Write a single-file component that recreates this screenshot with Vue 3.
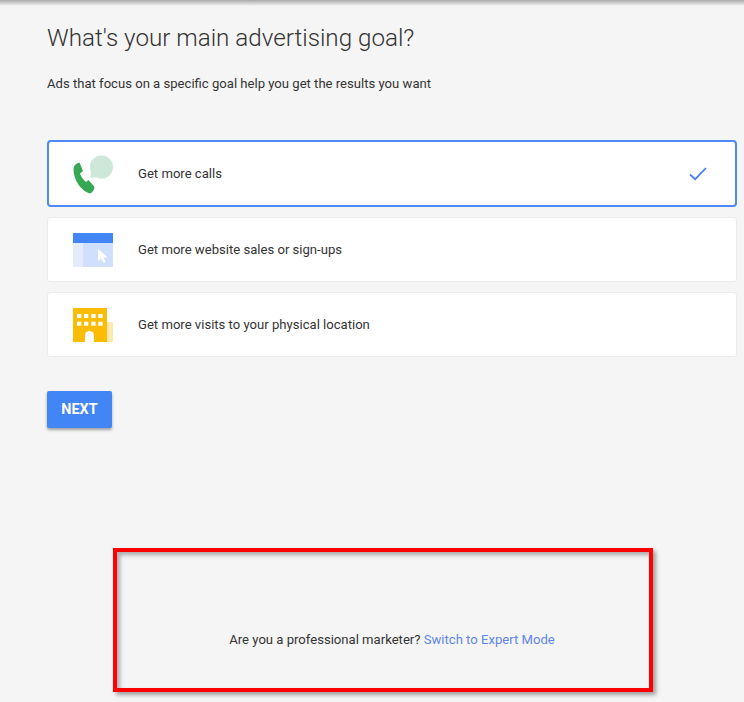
<script setup>
const goals = [
  { id: 'calls', label: 'Get more calls', selected: true },
  { id: 'web', label: 'Get more website sales or sign-ups', selected: false },
  { id: 'visits', label: 'Get more visits to your physical location', selected: false }
]
</script>

<template>
  <div class="page">
    <div class="top-shadow"></div>
    <h1 class="title">What's your main advertising goal?</h1>
    <p class="subtitle">Ads that focus on a specific goal help you get the results you want</p>

    <div class="goals">
      <div v-for="goal in goals" :key="goal.id" class="goal" :class="{ selected: goal.selected }">
        <div class="goal-icon">
          <svg v-if="goal.id === 'calls'" width="41" height="44" viewBox="0 0 41 44">
            <circle cx="28.5" cy="15" r="11.5" fill="#cde8d8" />
            <path d="M18 17 L17.5 26 L25 25 Z" fill="#cde8d8" />
            <path d="M0.5 17 C0.5 14 2.5 11.5 6.5 10.5 L10 19 L7 21.5 C8 25 10.5 28 13 30 L15.5 28 L21.5 35 C21 38 19.5 40.5 17 41.5 C8 39 0.5 28 0.5 17 Z" fill="#34a853" />
          </svg>
          <svg v-else-if="goal.id === 'web'" width="40" height="34" viewBox="0 0 40 34">
            <rect y="10" width="10" height="24" fill="#e4ecfc" />
            <rect x="10" y="10" width="30" height="24" fill="#d0dffb" />
            <rect width="40" height="10" fill="#4285f4" />
            <path d="M25 16 L25 28 L28 25.4 L30.6 30 L32.6 29 L30.4 24.6 L34.5 24.2 Z" fill="#ffffff" />
          </svg>
          <svg v-else width="40" height="34" viewBox="0 0 40 34">
            <rect x="33" y="14" width="7" height="20" fill="#ffe9b0" />
            <rect width="34" height="34" fill="#fbbc05" />
            <g fill="#ffffff">
              <rect x="4" y="6" width="4.3" height="4" />
              <rect x="11" y="6" width="4.3" height="4" />
              <rect x="18.3" y="6" width="4.3" height="4" />
              <rect x="25.3" y="6" width="4.3" height="4" />
              <rect x="4" y="13.7" width="4.3" height="4" />
              <rect x="11" y="13.7" width="4.3" height="4" />
              <rect x="18.3" y="13.7" width="4.3" height="4" />
              <rect x="25.3" y="13.7" width="4.3" height="4" />
              <path d="M12 34 V27.5 A4.5 4.5 0 0 1 21 27.5 V34 Z" />
            </g>
          </svg>
        </div>
        <span class="goal-label">{{ goal.label }}</span>
        <svg v-if="goal.selected" class="check" width="20" height="16" viewBox="0 0 20 16">
          <path d="M2 8.5 L7.2 13.2 L18 2" fill="none" stroke="#4a80ee" stroke-width="1.8" />
        </svg>
      </div>
    </div>

    <button class="next">NEXT</button>

    <p class="expert">
      Are you a professional marketer?
      <a class="expert-link">Switch to Expert Mode</a>
    </p>

    <!-- annotation drawn over the screenshot -->
    <div class="red-box"></div>
  </div>
</template>

<style scoped>
.page {
  position: relative;
  width: 744px;
  height: 702px;
  box-sizing: border-box;
  padding: 0 7px 0 47px;
  background-color: #f5f5f5;
  overflow: hidden;
  font-family: Roboto, "Liberation Sans", sans-serif;
}

.top-shadow {
  position: absolute;
  top: 0;
  left: 0;
  right: 0;
  height: 6px;
  background: linear-gradient(#a9a9a9, #f5f5f5);
}

.title {
  margin: 0;
  padding-top: 24px;
  font-size: 24.2px;
  line-height: 28px;
  font-weight: 300;
  color: #333;
}

.subtitle {
  margin: 22px 0 0;
  font-size: 13.1px;
  line-height: 20px;
  color: #333;
}

.goals {
  display: flex;
  flex-direction: column;
  gap: 10px;
  margin-top: 46px;
}

.goal {
  display: flex;
  align-items: center;
  height: 65px;
  box-sizing: border-box;
  padding-left: 25px;
  background-color: #fff;
  border: 1px solid #ececec;
  border-radius: 3px;
}

.goal.selected {
  height: 67px;
  border: 2px solid #4d8af5;
  border-radius: 4px;
  padding-left: 24px;
}

.goal-icon {
  display: flex;
  align-items: center;
  width: 65px;
}

.goal-label {
  font-size: 13.1px;
  color: #333;
}

.check {
  margin-left: auto;
  margin-right: 27px;
}

.next {
  display: block;
  width: 65px;
  height: 37px;
  margin-top: 34px;
  padding: 0;
  border: none;
  border-radius: 2px;
  background-color: #4285f4;
  color: #fff;
  font-family: Roboto, "Liberation Sans", sans-serif;
  font-size: 14.4px;
  font-weight: 700;
  box-shadow: 0 2px 3px rgba(0, 0, 0, 0.35);
}

.expert {
  margin: 202px 0 0;
  text-align: center;
  font-size: 13.1px;
  line-height: 20px;
  color: #333;
}

.expert-link {
  color: #5f85e8;
}

.red-box {
  position: absolute;
  left: 113px;
  top: 548px;
  width: 540px;
  height: 144px;
  box-sizing: border-box;
  border: 4px solid #ff0000;
  box-shadow: 3px 3px 4px rgba(0, 0, 0, 0.35), inset 3px 3px 4px rgba(0, 0, 0, 0.3);
}
</style>
